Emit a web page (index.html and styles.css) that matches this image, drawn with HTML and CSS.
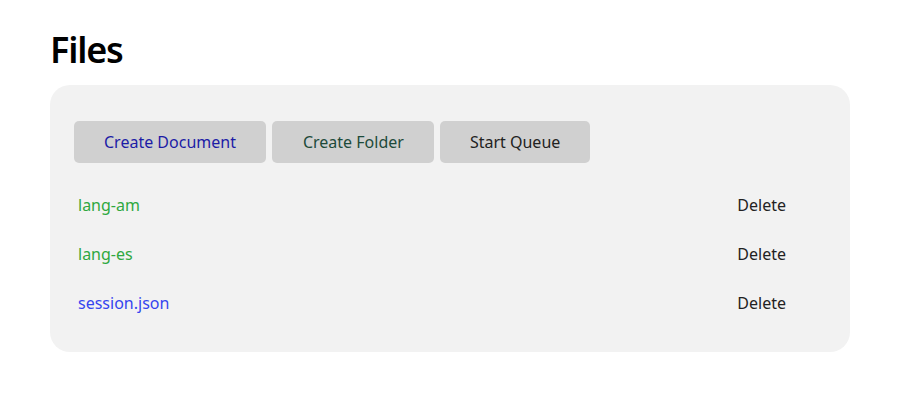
FILE: index.html
```html
<!DOCTYPE html>
<html>
<head>
<meta charset="utf-8">
<link rel="stylesheet" href="styles.css">
</head>
<body>
<main class="page">
  <h1 class="title">Files</h1>
  <section class="panel">
    <div class="toolbar">
      <button class="btn btn-doc">Create Document</button>
      <button class="btn btn-folder">Create Folder</button>
      <button class="btn btn-queue">Start Queue</button>
    </div>
    <ul class="list">
      <li class="row"><a class="name folder">lang-am</a><button class="del">Delete</button></li>
      <li class="row"><a class="name folder">lang-es</a><button class="del">Delete</button></li>
      <li class="row"><a class="name file">session.json</a><button class="del">Delete</button></li>
    </ul>
  </section>
</main>
</body>
</html>
```
FILE: styles.css
```css
* { box-sizing: border-box; }
body {
  margin: 0;
  background: #fff;
  font-family: "Noto Sans", "Open Sans", sans-serif;
  color: #222;
}
.page {
  padding: 26px 50px 0;
}
.title {
  margin: 0 0 12px;
  font-size: 36px;
  font-weight: 600;
  line-height: 47px;
  color: #000;
  letter-spacing: -1.2px;
}
.panel {
  background: #f2f2f2;
  border-radius: 20px;
  padding: 36px 24px 28px;
}
.toolbar {
  display: flex;
  gap: 6px;
}
.btn {
  font-family: inherit;
  font-size: 16px;
  height: 42px;
  padding: 0 30px;
  border: none;
  border-radius: 5px;
  background: #d0d0d0;
  color: #222;
}
.btn-doc { color: #1c1ca6; }
.btn-folder { color: #1d4a3a; padding: 0 30px 0 31px; }
.list {
  list-style: none;
  margin: 21px 0 0;
  padding: 0;
  display: flex;
  flex-direction: column;
  gap: 7px;
}
.row {
  height: 42px;
  display: flex;
  align-items: center;
  justify-content: space-between;
  padding: 0 40px 0 4px;
}
.name {
  font-size: 16px;
}
.folder { color: #2fa83f; }
.file { color: #3545ef; }
.del {
  font-family: inherit;
  font-size: 16px;
  background: none;
  border: none;
  padding: 0;
  color: #222;
}
```
